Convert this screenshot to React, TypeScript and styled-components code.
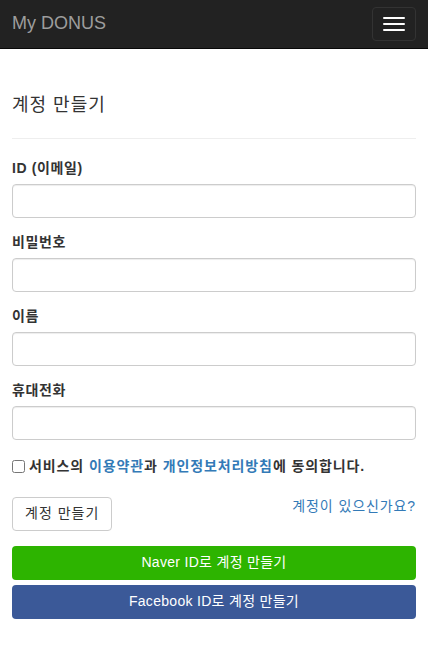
import React from 'react';
import styled, { createGlobalStyle } from 'styled-components';

const GlobalStyle = createGlobalStyle`
  * { box-sizing: border-box; }
  html, body { margin: 0; padding: 0; background: #fff; }
  body {
    font-family: "Liberation Sans", Arial, "Noto Sans CJK KR", sans-serif;
    font-size: 14px;
    line-height: 1.42857;
    color: #333;
  }
`;

const Navbar = styled.nav`
  height: 49px;
  background: #222;
  border-bottom: 1px solid #080808;
  display: flex;
  align-items: center;
  justify-content: space-between;
  padding: 0 12px;
`;

const Brand = styled.a`
  font-size: 18px;
  color: #9d9d9d;
  text-decoration: none;
`;

const Toggle = styled.button`
  width: 44px;
  height: 34px;
  border: 1px solid #333;
  border-radius: 4px;
  background: transparent;
  display: flex;
  flex-direction: column;
  align-items: center;
  justify-content: center;
  gap: 4px;
  padding: 0;
  margin-top: -1px;
`;

const Bar = styled.span`
  width: 22px;
  height: 2px;
  background: #fff;
  border-radius: 1px;
`;

const Container = styled.div`
  padding: 0 12px;
`;

const Title = styled.h3`
  margin: 45px 0 0;
  font-size: 18px;
  font-weight: 400;
  line-height: 22px;
  letter-spacing: 1px;
`;

const Rule = styled.hr`
  margin: 22px 0 20px;
  border: 0;
  border-top: 1px solid #eee;
`;

const FormGroup = styled.div`
  margin-bottom: 15px;
`;

const Label = styled.label`
  display: block;
  font-weight: 700;
  margin-bottom: 5px;
  letter-spacing: 0.6px;
`;

const Input = styled.input`
  display: block;
  width: 100%;
  height: 34px;
  border: 1px solid #ccc;
  border-radius: 4px;
  box-shadow: inset 0 1px 1px rgba(0, 0, 0, 0.075);
  font: inherit;
  padding: 6px 12px;
`;

const Agree = styled.label`
  display: flex;
  align-items: center;
  font-weight: 700;
  margin-top: 17px;
  gap: 4px;
  letter-spacing: 0.9px;
`;

const Check = styled.input`
  margin: 0;
  width: 13px;
  height: 13px;
`;

const Link = styled.a<{ $bold?: boolean }>`
  color: #337ab7;
  text-decoration: none;
  font-weight: ${(p) => (p.$bold ? 700 : 400)};
  letter-spacing: 0.9px;
`;

const Actions = styled.div`
  display: flex;
  justify-content: space-between;
  align-items: flex-start;
  margin-top: 20px;
`;

const DefaultButton = styled.button`
  height: 34px;
  padding: 6px 12px;
  border: 1px solid #ccc;
  border-radius: 4px;
  background: #fff;
  color: #333;
  font: inherit;
  letter-spacing: 1px;
`;

const Social = styled.button<{ $bg: string }>`
  display: block;
  width: 100%;
  height: 34px;
  border: 0;
  border-radius: 4px;
  background: ${(p) => p.$bg};
  color: #fff;
  font: inherit;
  letter-spacing: 0.3px;
  margin-bottom: 5px;
`;

const SocialStack = styled.div`
  margin-top: 15px;
`;

export default function App() {
  return (
    <>
      <GlobalStyle />
      <Navbar>
        <Brand href="#">My DONUS</Brand>
        <Toggle>
          <Bar />
          <Bar />
          <Bar />
        </Toggle>
      </Navbar>
      <Container>
        <Title>계정 만들기</Title>
        <Rule />
        <FormGroup>
          <Label>ID (이메일)</Label>
          <Input type="email" />
        </FormGroup>
        <FormGroup>
          <Label>비밀번호</Label>
          <Input type="password" />
        </FormGroup>
        <FormGroup>
          <Label>이름</Label>
          <Input type="text" />
        </FormGroup>
        <FormGroup>
          <Label>휴대전화</Label>
          <Input type="tel" />
        </FormGroup>
        <Agree>
          <Check type="checkbox" />
          <span>
            서비스의 <Link $bold href="#">이용약관</Link>과{' '}
            <Link $bold href="#">개인정보처리방침</Link>에 동의합니다.
          </span>
        </Agree>
        <Actions>
          <DefaultButton>계정 만들기</DefaultButton>
          <Link href="#">계정이 있으신가요?</Link>
        </Actions>
        <SocialStack>
          <Social $bg="#2db400">Naver ID로 계정 만들기</Social>
          <Social $bg="#3b5998">Facebook ID로 계정 만들기</Social>
        </SocialStack>
      </Container>
    </>
  );
}
